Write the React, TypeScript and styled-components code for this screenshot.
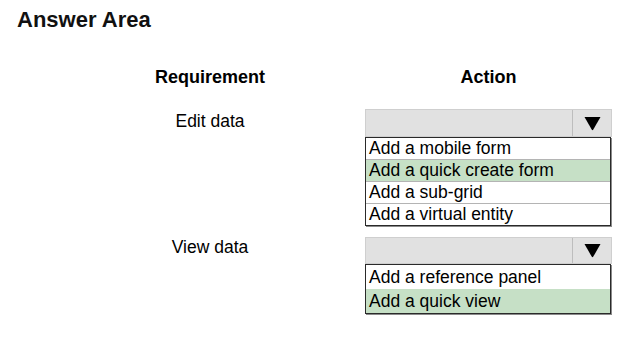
import React from "react";
import styled, { createGlobalStyle } from "styled-components";

const GlobalStyle = createGlobalStyle`
    html, body {
        margin: 0;
        padding: 0;
        background: #ffffff;
    }
    body {
        font-family: "Liberation Sans", Arial, sans-serif;
        color: #000;
    }
`;

const Page = styled.div`
    width: 644px;
    height: 343px;
    background: #fff;
    overflow: hidden;
`;

const Title = styled.h1`
    margin: 9px 0 0 17px;
    font-size: 22px;
    line-height: 22px;
    font-weight: 700;
    color: #111;
`;

const Row = styled.div<{ $mt: number }>`
    display: flex;
    align-items: flex-start;
    gap: 85px;
    padding-left: 140px;
    margin-top: ${(p) => p.$mt}px;
`;

const LeftCell = styled.div<{ $pt?: number; $bold?: boolean }>`
    width: 140px;
    text-align: center;
    padding-top: ${(p) => p.$pt ?? 0}px;
    font-size: ${(p) => (p.$bold ? "18px" : "17.5px")};
    line-height: ${(p) => (p.$bold ? "18px" : "20px")};
    font-weight: ${(p) => (p.$bold ? 700 : 400)};
`;

const RightCell = styled.div<{ $bold?: boolean }>`
    width: 247px;
    text-align: center;
    font-size: 18px;
    line-height: 18px;
    font-weight: ${(p) => (p.$bold ? 700 : 400)};
`;

const Dropdown = styled.div`
    width: 247px;
    display: flex;
    flex-direction: column;
`;

const Select = styled.div<{ $h: number }>`
    display: flex;
    height: ${(p) => p.$h}px;
    background: #e1e1e1;
    border: 1px solid #cfcfcf;
    box-sizing: border-box;
`;

const SelectValue = styled.div`
    flex: 1;
`;

const ArrowBox = styled.div`
    width: 38px;
    border-left: 1px solid #bdbdbd;
    display: flex;
    align-items: center;
    justify-content: center;
`;

const List = styled.ul`
    margin: 0;
    padding: 0;
    list-style: none;
    width: 246px;
    border: 1px solid #2a2a2a;
    box-shadow: 1px 1px 0 #8a8a8a;
    box-sizing: border-box;
`;

const Option = styled.li<{ $selected?: boolean; $h: number; $sep?: boolean }>`
    height: ${(p) => p.$h}px;
    line-height: ${(p) => p.$h}px;
    padding-left: 3px;
    font-size: 17.5px;
    color: #000;
    background: ${(p) => (p.$selected ? "#c6e0c6" : "#fff")};
    border-top: ${(p) => (p.$sep ? "1px solid #b4b4b4" : "none")};
    white-space: nowrap;
`;

const Arrow = () => (
    <svg width="17" height="15" viewBox="0 0 17 15">
        <path d="M0.5 1 L16.5 1 L9.3 13.6 Q8.5 14.8 7.7 13.6 Z" fill="#000" />
    </svg>
);

type Choice = { label: string; selected?: boolean };

function DropList({ options, rowH, sep, headH }: { options: Choice[]; rowH: number; sep: boolean; headH: number }) {
    return (
        <Dropdown>
            <Select $h={headH}>
                <SelectValue />
                <ArrowBox>
                    <Arrow />
                </ArrowBox>
            </Select>
            <List>
                {options.map((o, i) => (
                    <Option key={o.label} $selected={o.selected} $h={rowH} $sep={sep && i > 0}>
                        {o.label}
                    </Option>
                ))}
            </List>
        </Dropdown>
    );
}

const editOptions: Choice[] = [
    { label: "Add a mobile form" },
    { label: "Add a quick create form", selected: true },
    { label: "Add a sub-grid" },
    { label: "Add a virtual entity" },
];

const viewOptions: Choice[] = [
    { label: "Add a reference panel" },
    { label: "Add a quick view", selected: true },
];

export default function App() {
    return (
        <Page>
            <GlobalStyle />
            <Title>Answer Area</Title>
            <Row $mt={37}>
                <LeftCell $bold>Requirement</LeftCell>
                <RightCell $bold>Action</RightCell>
            </Row>
            <Row $mt={23}>
                <LeftCell $pt={2}>Edit data</LeftCell>
                <DropList options={editOptions} rowH={21} sep headH={28} />
            </Row>
            <Row $mt={11}>
                <LeftCell $pt={0}>View data</LeftCell>
                <DropList options={viewOptions} rowH={24} sep={false} headH={27} />
            </Row>
        </Page>
    );
}
